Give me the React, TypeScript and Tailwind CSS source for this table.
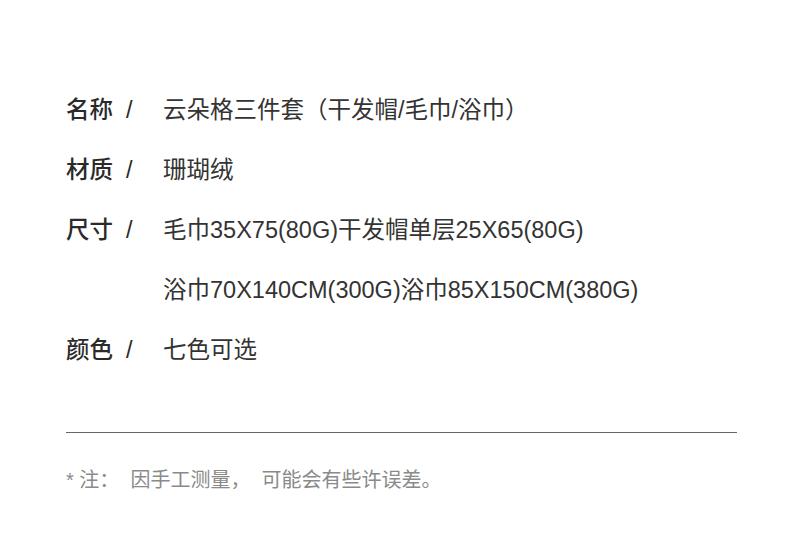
import React from 'react';

const rows: { label: string; values: string[] }[] = [
  { label: '名称  /', values: ['云朵格三件套（干发帽/毛巾/浴巾）'] },
  { label: '材质  /', values: ['珊瑚绒'] },
  { label: '尺寸  /', values: ['毛巾35X75(80G)干发帽单层25X65(80G)', '浴巾70X140CM(300G)浴巾85X150CM(380G)'] },
  { label: '颜色  /', values: ['七色可选'] },
];

const App = () => {
  return (
    <div
      className="w-[790px] h-[551px] bg-white overflow-hidden pt-[80px] pl-[66px]"
      style={{ fontFamily: '"Liberation Sans", "Noto Sans CJK SC", sans-serif' }}
    >
      <div className="flex flex-col">
        {rows.map((r) => (
          <div key={r.label} className="flex">
            <div className="w-[97px] shrink-0 whitespace-pre text-[23.5px] leading-[60px] font-medium text-[#2a2a2a]">{r.label}</div>
            <div className="flex flex-col">
              {r.values.map((v) => (
                <div key={v} className="text-[23.5px] leading-[60px] text-[#333333]">{v}</div>
              ))}
            </div>
          </div>
        ))}
      </div>
      <div className="mt-[52px] w-[671px] border-t border-[#666666]" />
      <div className="mt-[34px] text-[20px] leading-[26px] text-[#8a8a8a] whitespace-pre">* 注：  因手工测量，  可能会有些许误差。</div>
    </div>
  );
};

export default App;
